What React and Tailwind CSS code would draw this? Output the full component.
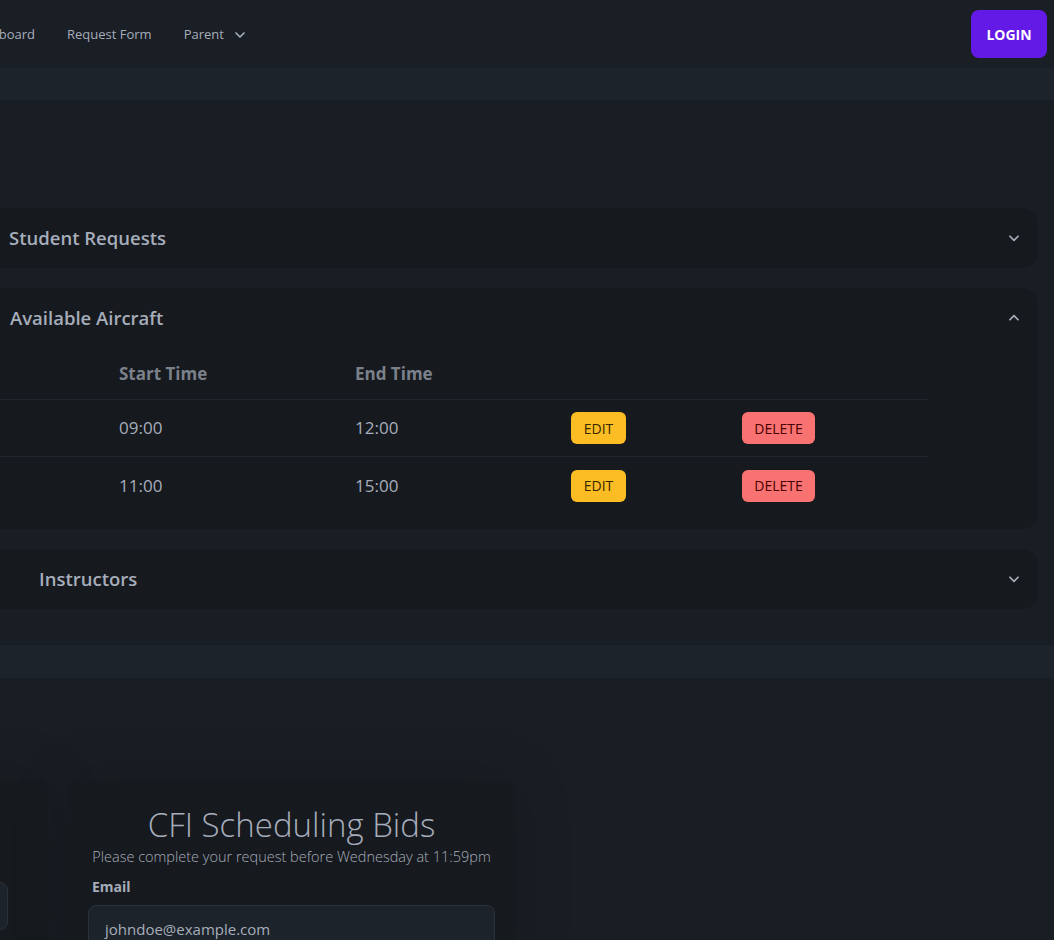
import { ChevronDown } from 'lucide-react';

const rows = [
  { tail: 'N12345', start: '09:00', end: '12:00' },
  { tail: 'N67890', start: '11:00', end: '15:00' },
];

function Chevron({ up }) {
  return (
    <svg viewBox="0 0 24 24" className="w-[14px] h-[14px] text-[#a6adbb]" fill="none" stroke="currentColor" strokeWidth="3" strokeLinecap="round" strokeLinejoin="round">
      {up ? <path d="M5 15l7-7 7 7" /> : <path d="M5 9l7 7 7-7" />}
    </svg>
  );
}

function CollapseHeader({ title, up, pad }) {
  return (
    <div className={`flex h-[60px] items-center justify-between pr-[17px] ${pad}`}>
      <h2 className="text-[18.5px] font-semibold text-[#a6adbb]">{title}</h2>
      <Chevron up={up} />
    </div>
  );
}

export default function App() {
  return (
    <div className="min-h-screen w-full overflow-hidden bg-[#191e24] text-[#a6adbb]" style={{ fontFamily: '"Open Sans", "Noto Sans", sans-serif' }}>
      {/* Navbar */}
      <nav className="flex h-[68px] items-center justify-between bg-[#1a1e25] pr-[7px]">
        <div className="flex items-center gap-8 pt-px text-[13px] text-[#a6adbb]">
          <div className="flex w-[35px] justify-end whitespace-nowrap">Dashboard</div>
          <a className="whitespace-nowrap">Request Form</a>
          <div className="flex items-center gap-2">
            <span>Parent</span>
            <ChevronDown className="h-4 w-4" strokeWidth={2.5} />
          </div>
        </div>
        <button className="h-[48px] w-[76px] rounded-lg bg-[#641ae6] text-[14px] font-bold text-white">LOGIN</button>
      </nav>

      <div className="h-[32px] bg-[#1d232a]" />

      {/* Admin collapses */}
      <section className="flex flex-col gap-5 pb-[36px] pt-[108px]">
        <div className="-ml-4 mr-4 rounded-2xl bg-[#16191e]">
          <CollapseHeader title="Student Requests" pad="pl-[25px]" />
        </div>

        <div className="-ml-4 mr-4 rounded-2xl bg-[#16191e] pb-[15px]">
          <CollapseHeader title="Available Aircraft" up pad="pl-[26px]" />
          <div className="-ml-[184px] w-[1128px] text-[17px]">
            <div className="flex h-[52px] items-center border-b border-[#20252c] font-bold text-[#7b818b]">
              <div className="w-[303px] px-4">Tail Number</div>
              <div className="w-[236px] px-4">Start Time</div>
              <div className="w-[216px] px-4">End Time</div>
              <div className="w-[171px] px-4" />
              <div className="w-[202px] px-4" />
            </div>
            {rows.map((r, i) => (
              <div key={r.tail} className={`flex h-[57px] items-center ${i === 0 ? 'border-b border-[#20252c]' : ''}`}>
                <div className="w-[303px] px-4">{r.tail}</div>
                <div className="w-[236px] px-4">{r.start}</div>
                <div className="w-[216px] px-4">{r.end}</div>
                <div className="w-[171px] px-4">
                  <button className="h-[32px] w-[55px] rounded-md bg-[#fbbd23] text-[14px] text-[#382800]">EDIT</button>
                </div>
                <div className="w-[202px] px-4">
                  <button className="h-[32px] w-[73px] rounded-md bg-[#f87272] text-[14px] text-[#470000]">DELETE</button>
                </div>
              </div>
            ))}
          </div>
        </div>

        <div className="-ml-4 mr-4 rounded-2xl bg-[#16191e]">
          <CollapseHeader title="Instructors" pad="pl-[55px]" />
        </div>
      </section>

      <div className="h-[33px] bg-[#1d232a]" />

      {/* Request forms */}
      <section className="flex gap-5 pt-[103px]">
        <div className="-ml-[360px] w-[408px] shrink-0 rounded-xl bg-[#16191e] pl-5 pr-10 pt-[101px] shadow-[0_0_60px_rgba(0,0,0,0.15)]">
          <div className="h-[48px] rounded-lg border border-[#2b323b] bg-[#1d232a]" />
        </div>
        <div className="w-[447px] shrink-0 rounded-xl bg-[#16191e] px-5 pb-6 pt-[22px] shadow-[0_0_60px_rgba(0,0,0,0.15)]">
          <h1 className="whitespace-nowrap text-center text-[33px] font-light leading-[44px] text-[#a6adbb]">CFI Scheduling Bids</h1>
          <p className="whitespace-nowrap text-center text-[14.5px] font-light leading-[20px]">Please complete your request before Wednesday at 11:59pm</p>
          <label className="mt-px block px-1 py-2 text-[14px] font-bold text-[#a6adbb]">Email</label>
          <div className="flex h-[48px] items-center rounded-lg border border-[#2b323b] bg-[#1d232a] px-4 text-[15px] text-[#a6adbb]">
            johndoe@example.com
          </div>
        </div>
      </section>
    </div>
  );
}
